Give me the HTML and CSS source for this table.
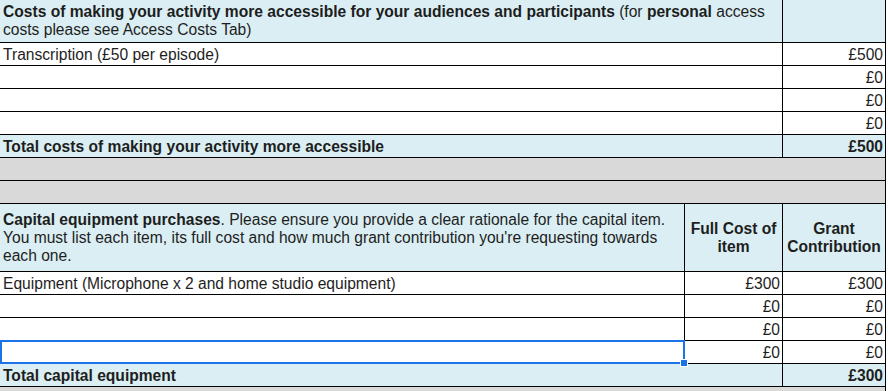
FILE: index.html
```html
<!DOCTYPE html>
<html>
<head>
<meta charset="utf-8">
<link rel="stylesheet" href="styles.css">
</head>
<body>
<table class="sheet">
  <colgroup>
    <col class="c1">
    <col class="c2">
    <col class="c3">
  </colgroup>
  <tr class="head-top">
    <td colspan="2" class="blue txt"><b>Costs of making your activity more accessible for your audiences and participants</b> (for <b>personal</b> access costs please see Access Costs Tab)</td>
    <td class="blue"></td>
  </tr>
  <tr class="row"><td colspan="2" class="txt">Transcription (£50 per episode)</td><td class="num">£500</td></tr>
  <tr class="row"><td colspan="2"></td><td class="num">£0</td></tr>
  <tr class="row"><td colspan="2"></td><td class="num">£0</td></tr>
  <tr class="row"><td colspan="2"></td><td class="num">£0</td></tr>
  <tr class="row total"><td colspan="2" class="txt">Total costs of making your activity more accessible</td><td class="num">£500</td></tr>
  <tr class="row grey"><td colspan="3"></td></tr>
  <tr class="row grey"><td colspan="3"></td></tr>
  <tr class="head-cap">
    <td class="blue txt"><b>Capital equipment purchases</b>. Please ensure you provide a clear rationale for the capital item. You must list each item, its full cost and how much grant contribution you're requesting towards each one.</td>
    <td class="blue colhead">Full Cost of item</td>
    <td class="blue colhead">Grant Contribution</td>
  </tr>
  <tr class="row"><td class="txt">Equipment (Microphone x 2 and home studio equipment)</td><td class="num">£300</td><td class="num">£300</td></tr>
  <tr class="row"><td></td><td class="num">£0</td><td class="num">£0</td></tr>
  <tr class="row"><td></td><td class="num">£0</td><td class="num">£0</td></tr>
  <tr class="row"><td class="selected"><div class="sel-box"><span class="handle"></span></div></td><td class="num">£0</td><td class="num">£0</td></tr>
  <tr class="row total"><td colspan="2" class="txt">Total capital equipment</td><td class="num">£300</td></tr>
  <tr class="row grey"><td colspan="3"></td></tr>
</table>
</body>
</html>
```
FILE: styles.css
```css
html, body {
  margin: 0;
  padding: 0;
  background: #ffffff;
}
body {
  font-family: "Liberation Sans", Arial, sans-serif;
  font-size: 15.6px;
  color: #1e1e1e;
  overflow: hidden;
}
.sheet {
  border-collapse: collapse;
  table-layout: fixed;
  width: 886px;
  margin-top: -1px;
  margin-left: -1px;
}
.c1 { width: 685px; }
.c2 { width: 98px; }
.c3 { width: 103px; }
.sheet td {
  border: 1px solid #000;
  padding: 0 3px;
  line-height: 18px;
  vertical-align: bottom;
  overflow: hidden;
  white-space: nowrap;
}
.head-top td {
  height: 43px;
  box-sizing: border-box;
  vertical-align: top;
  white-space: normal;
  padding-top: 3px;
  padding-right: 14px;
}
.head-cap td {
  height: 68px;
  box-sizing: border-box;
  vertical-align: middle;
  white-space: normal;
}
.head-cap td.txt {
  padding-right: 14px;
}
.row td {
  height: 23px;
  padding-bottom: 1px;
  box-sizing: border-box;
}
.blue { background: #daeef3; }
.total td { background: #daeef3; font-weight: bold; }
.grey td { background: #d9d9d9; }
.num { text-align: right; padding-right: 2px !important; }
.colhead {
  text-align: center;
  font-weight: bold;
  padding: 0 !important;
}
.sheet td.selected {
  padding: 0;
  overflow: visible;
}
.sel-box {
  position: relative;
  height: 24px;
  margin: -1px -1px -1px 0;
  box-sizing: border-box;
  border: 2px solid #1a73e8;
}
.handle {
  position: absolute;
  right: -5px;
  bottom: -5px;
  width: 6px;
  height: 6px;
  background: #1a73e8;
  border: 1px solid #fff;
  z-index: 2;
}
```
